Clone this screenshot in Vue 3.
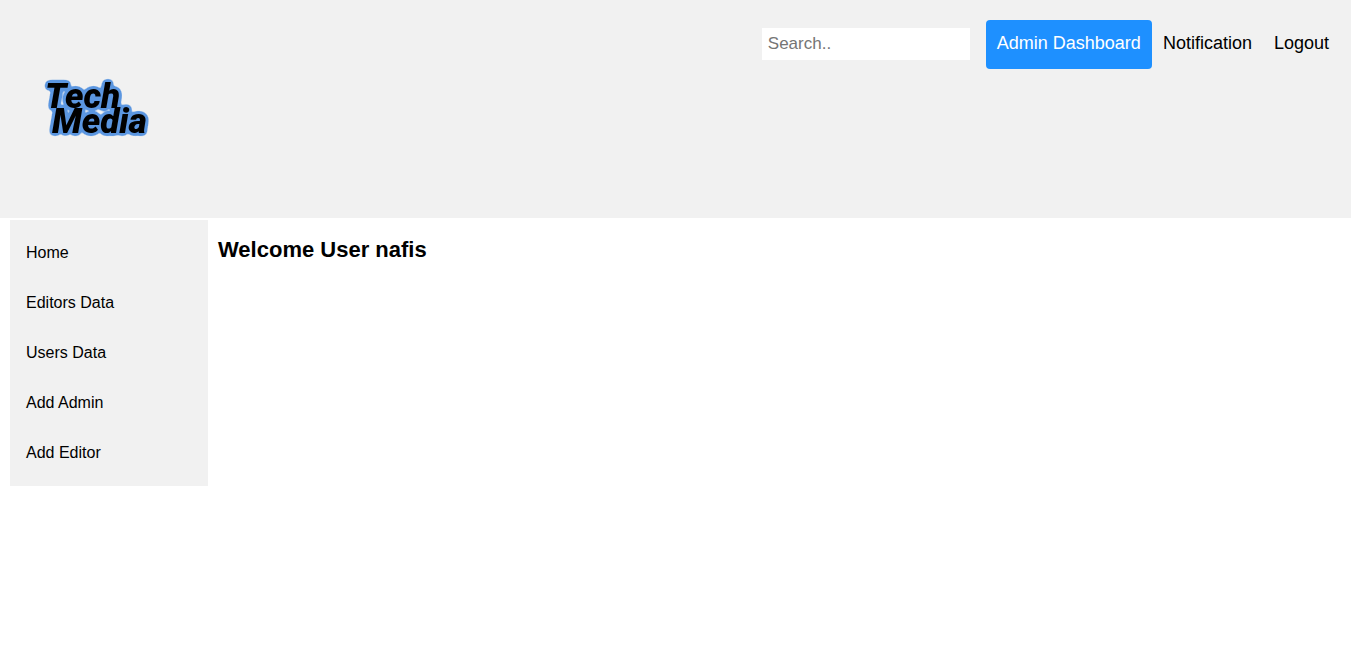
<script setup>
const topLinks = [
  { label: 'Admin Dashboard', active: true },
  { label: 'Notification', active: false },
  { label: 'Logout', active: false },
]
const sideLinks = ['Home', 'Editors Data', 'Users Data', 'Add Admin', 'Add Editor']
</script>

<template>
  <div class="page">
    <header class="header">
      <a class="logo" href="#" aria-label="Tech Media">
        <svg width="120" height="68" viewBox="0 0 120 68">
          <defs>
            <filter id="outline" x="-10%" y="-20%" width="120%" height="140%" color-interpolation-filters="sRGB">
              <feGaussianBlur in="SourceAlpha" stdDeviation="2" result="soft" />
              <feComponentTransfer in="soft" result="edge">
                <feFuncA type="linear" slope="14" intercept="-0.5" />
              </feComponentTransfer>
              <feFlood flood-color="#5b96e0" />
              <feComposite in2="edge" operator="in" result="glow" />
              <feMerge>
                <feMergeNode in="glow" />
                <feMergeNode in="SourceGraphic" />
              </feMerge>
            </filter>
          </defs>
          <g filter="url(#outline)">
            <text x="7" y="33">Tech</text>
            <text x="14" y="58">Media</text>
          </g>
        </svg>
      </a>
      <nav class="top-nav">
        <input class="search" type="text" placeholder="Search.." aria-label="Search" />
        <a
          v-for="link in topLinks"
          :key="link.label"
          href="#"
          class="top-link"
          :class="{ active: link.active }"
        >{{ link.label }}</a>
      </nav>
    </header>
    <div class="body">
      <nav class="sidebar">
        <a v-for="label in sideLinks" :key="label" href="#" class="side-link">{{ label }}</a>
      </nav>
      <main class="content">
        <h2 class="title">Welcome User nafis</h2>
      </main>
    </div>
  </div>
</template>

<style>
body {
  margin: 0;
  background: #fff;
}
</style>

<style scoped>
.page,
.page * {
  box-sizing: border-box;
}
.page {
  font-family: "Liberation Sans", Arial, sans-serif;
  color: #000;
}
.header {
  display: flex;
  align-items: flex-start;
  justify-content: space-between;
  padding: 20px 11px 20px 10px;
  background: #f1f1f1;
}
.logo {
  display: block;
  padding: 55px 28px;
}
.logo svg {
  display: block;
}
.logo text {
  font-family: Roboto, sans-serif;
  font-size: 35px;
  font-style: italic;
  font-weight: 900;
  fill: #000;
}
.top-nav {
  display: flex;
  align-items: flex-start;
}
.search {
  width: 208px;
  height: 32px;
  margin: 8px 16px 0 0;
  padding: 6px;
  border: none;
  background: #fff;
  font-family: inherit;
  font-size: 17px;
}
.search::placeholder {
  color: #757575;
}
.top-link {
  padding: 11px 11px 13px;
  border-radius: 4px;
  color: #000;
  font-size: 18px;
  line-height: 25px;
  text-decoration: none;
}
.top-link.active {
  background: #1e90ff;
  color: #fff;
}
.body {
  display: flex;
  align-items: flex-start;
  gap: 10px;
  padding: 2px 10px;
}
.sidebar {
  flex: 0 0 198px;
  padding: 8px 0;
  background: #f1f1f1;
}
.side-link {
  display: block;
  padding: 16px;
  color: #000;
  font-size: 16px;
  line-height: 18px;
  text-decoration: none;
}
.content {
  flex: 1;
}
.title {
  margin: 17px 0;
  font-size: 22px;
  line-height: 26px;
}
</style>
